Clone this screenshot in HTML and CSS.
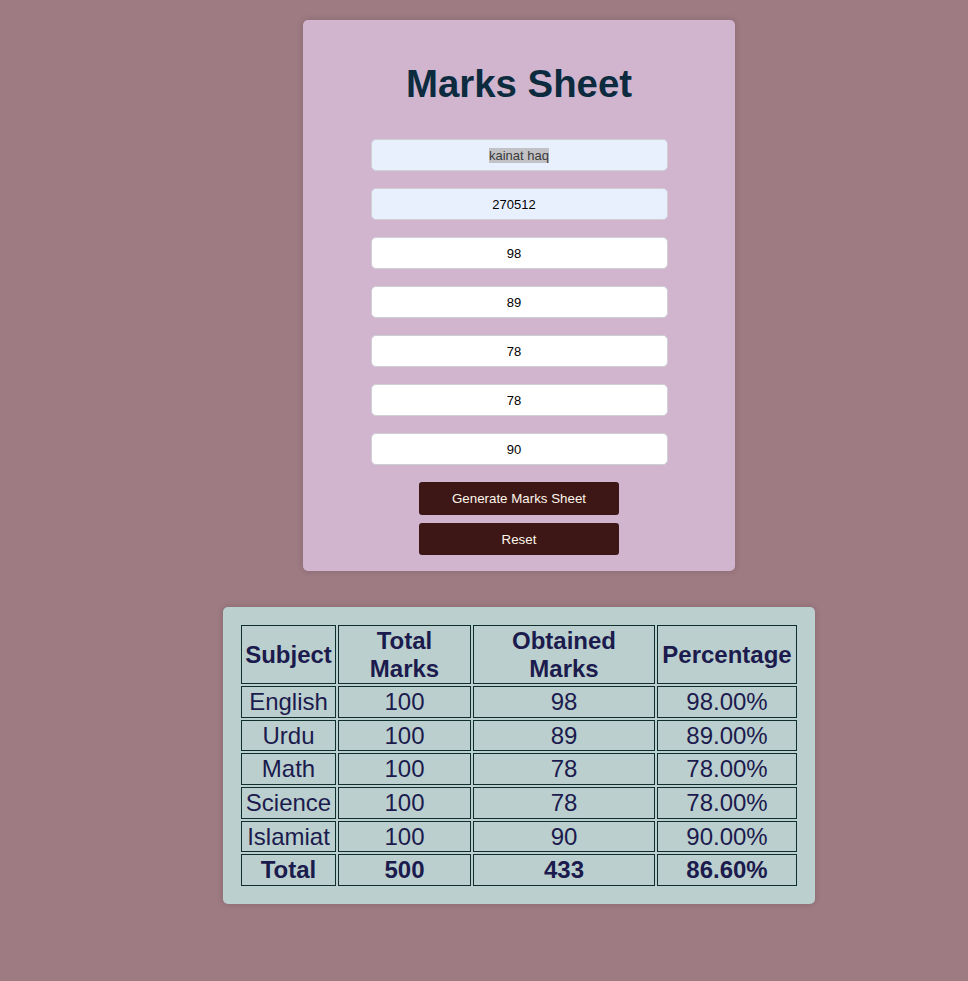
FILE: index.html
```html
<!DOCTYPE html>
<html>
<head>
<meta charset="utf-8">
<title>Marks Sheet</title>
<link rel="stylesheet" href="styles.css">
</head>
<body>
<div class="form-card">
  <h1 class="title">Marks Sheet</h1>
  <div class="fields">
    <div class="field autofill"><span class="sel">kainat haq</span></div>
    <div class="field autofill num">270512</div>
    <div class="field num">98</div>
    <div class="field num">89</div>
    <div class="field num">78</div>
    <div class="field num">78</div>
    <div class="field num">90</div>
  </div>
  <div class="buttons">
    <button class="btn btn-gen">Generate Marks Sheet</button>
    <button class="btn btn-reset">Reset</button>
  </div>
</div>

<div class="table-card">
  <table class="marks">
    <thead>
      <tr><th class="c-subj">Subject</th><th class="c-total">Total<br>Marks</th><th class="c-obt">Obtained<br>Marks</th><th class="c-pct">Percentage</th></tr>
    </thead>
    <tbody>
      <tr><td>English</td><td>100</td><td>98</td><td>98.00%</td></tr>
      <tr><td>Urdu</td><td>100</td><td>89</td><td>89.00%</td></tr>
      <tr><td>Math</td><td>100</td><td>78</td><td>78.00%</td></tr>
      <tr><td>Science</td><td>100</td><td>78</td><td>78.00%</td></tr>
      <tr><td>Islamiat</td><td>100</td><td>90</td><td>90.00%</td></tr>
      <tr class="total"><td>Total</td><td>500</td><td>433</td><td>86.60%</td></tr>
    </tbody>
  </table>
</div>
</body>
</html>
```
FILE: styles.css
```css
html, body {
  margin: 0;
  padding: 0;
}
body {
  background: #9e7a82;
  font-family: "Liberation Sans", Arial, sans-serif;
  display: flex;
  flex-direction: column;
  align-items: center;
  padding: 20px 0 0 70px;
  min-height: 981px;
  box-sizing: border-box;
}
.form-card {
  width: 432px;
  box-sizing: border-box;
  background: #d1b5cf;
  border-radius: 5px;
  box-shadow: 0 0 6px rgba(0, 0, 0, 0.15);
  padding: 20px 0 16px;
  display: flex;
  flex-direction: column;
  align-items: center;
}
.title {
  margin: 22px 0 33px;
  font-size: 38.4px;
  line-height: 44px;
  font-weight: bold;
  color: #0c2b3e;
  text-align: center;
}
.fields {
  display: flex;
  flex-direction: column;
  gap: 17px;
}
.field {
  width: 297px;
  height: 32px;
  box-sizing: border-box;
  background: #ffffff;
  border: 1px solid #cfcfd6;
  border-radius: 5px;
  font-size: 13px;
  color: #000;
  display: flex;
  align-items: center;
  justify-content: center;
}
.field.num {
  padding-right: 10px;
}
.field.autofill {
  background: #e8f0fe;
}
.sel {
  background: #c2c2c6;
  color: #3a3a3a;
}
.buttons {
  margin-top: 17px;
  display: flex;
  flex-direction: column;
  gap: 8px;
}
.btn {
  width: 200px;
  border: none;
  border-radius: 3px;
  background: #3d1715;
  color: #fdf6ea;
  font-family: "Liberation Sans", Arial, sans-serif;
  font-size: 13.33px;
  padding: 0;
}
.btn-gen { height: 33px; }
.btn-reset { height: 32px; }

.table-card {
  margin-top: 36px;
  width: 592px;
  box-sizing: border-box;
  background: #bbcfcf;
  border-radius: 5px;
  box-shadow: 0 0 6px rgba(0, 0, 0, 0.15);
  padding: 16px;
}
.marks {
  width: 100%;
  border-spacing: 2px;
  border-collapse: separate;
  color: #1b1b4d;
  font-size: 24px;
}
.marks th,
.marks td {
  border: 1px solid #0f2f2d;
  padding: 1px;
  text-align: center;
  line-height: 27.6px;
}
.marks th {
  font-weight: bold;
}
.marks .c-subj { width: 91px; }
.marks .c-total { width: 129px; }
.marks .c-obt { width: 178px; }
.marks .c-pct { width: 136px; }
.marks .total td {
  font-weight: bold;
}
```
